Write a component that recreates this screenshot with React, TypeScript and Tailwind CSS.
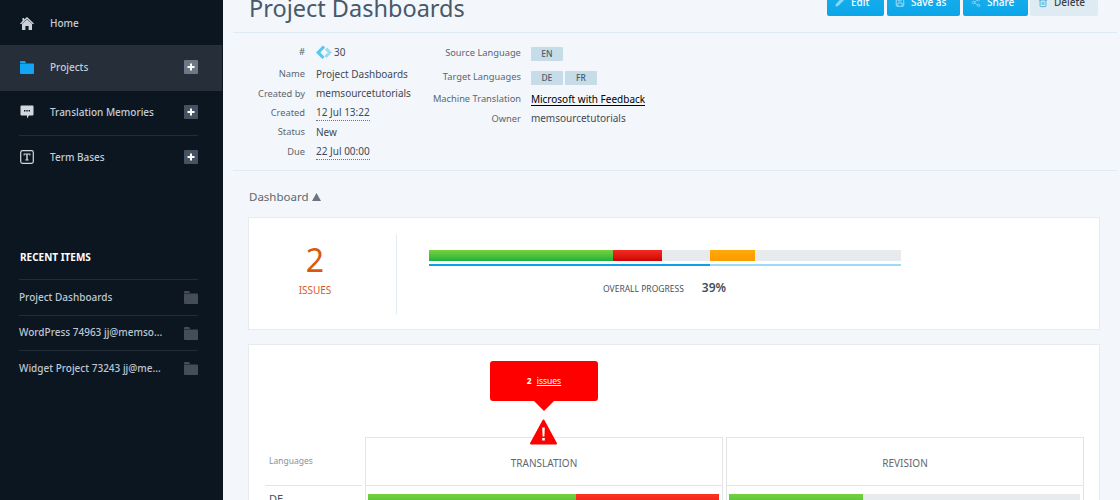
import { Pencil, Save, Share2, Trash2 } from "lucide-react";

const font = { fontFamily: '"Noto Sans", sans-serif' };

function Plus({ active }: { active?: boolean }) {
  return (
    <span className={`flex h-[14px] w-[14px] items-center justify-center rounded-[1px] text-white ${active ? "bg-[#6c7885]" : "bg-[#445261]"}`}>
      <svg width="8" height="8" viewBox="0 0 8 8"><path d="M3 0.5h2v2.5h2.5v2H5v2.5H3V5H0.5V3H3z" fill="#fff" /></svg>
    </span>
  );
}

function FolderIcon({ color, w = 14, h = 14 }: { color: string; w?: number; h?: number }) {
  return (
    <svg width={w} height={h} viewBox="0 0 14 14">
      <path d="M0 2a1 1 0 0 1 1-1h3.5a1 1 0 0 1 .9.6L6 3H1L0 3.6z" fill={color} />
      <path d="M0 4.5a1 1 0 0 1 1-1h12a1 1 0 0 1 1 1V13a1 1 0 0 1-1 1H1a1 1 0 0 1-1-1z" fill={color} />
    </svg>
  );
}

function NavRow({ icon, label, plus, active, h }: { icon: React.ReactNode; label: string; plus?: boolean; active?: boolean; h: string }) {
  return (
    <div className={`flex items-center pl-[20px] pr-[24px] ${h} ${active ? "bg-[#262e39]" : ""}`}>
      <span className="flex w-[30px] shrink-0 items-center">{icon}</span>
      <span className="flex-1 text-[10px] font-medium text-[#c3cdd9]">{label}</span>
      {plus && <Plus active={active} />}
    </div>
  );
}

function Recent({ label }: { label: string }) {
  return (
    <div className="flex h-[35.5px] items-center justify-between border-t border-[#222c37]">
      <span className="text-[10px] font-medium text-[#bcc7d3]">{label}</span>
      <FolderIcon color="#454d57" />
    </div>
  );
}

function Meta({ label, value, dotted, h }: { label: string; value: React.ReactNode; dotted?: boolean; h: string }) {
  return (
    <div className={`flex items-center ${h}`}>
      <span className="w-[72px] shrink-0 text-right text-[9.3px] text-[#5a6673]">{label}</span>
      <span className={`ml-[11px] whitespace-nowrap text-[10px] leading-[15px] text-[#3f4a56] ${dotted ? "border-b border-dotted border-[#6a7580]" : ""}`}>{value}</span>
    </div>
  );
}

function Meta2({ label, value, h }: { label: string; value: React.ReactNode; h: string }) {
  return (
    <div className={`flex items-center ${h}`}>
      <span className="w-[88px] shrink-0 whitespace-nowrap text-right text-[9.3px] text-[#5a6673]">{label}</span>
      <span className="ml-[10px] flex gap-[2px] whitespace-nowrap text-[10px] text-[#3f4a56]">{value}</span>
    </div>
  );
}

function Tag({ t }: { t: string }) {
  return <span className="mt-[2px] flex h-[14px] w-[32px] items-center justify-center rounded-[1px] bg-[#c6dde9] text-[8.5px] font-medium text-[#4d5b68]">{t}</span>;
}

function Btn({ icon, label, w, light }: { icon: React.ReactNode; label: string; w: string; light?: boolean }) {
  return (
    <div className={`flex h-[28px] items-end justify-start gap-[6px] rounded-[2px] pb-[8px] pl-[8px] text-[10px] font-medium leading-[12px] ${w} ${light ? "bg-[#deebf2] text-[#3a3f49]" : "bg-gradient-to-b from-[#1bb1ee] to-[#0aa5e8] text-white"}`}>
      <span className="flex h-[12px] w-[10px] items-center">{icon}</span>
      <span>{label}</span>
    </div>
  );
}

export default function App() {
  return (
    <div className="flex h-[500px] w-[1120px] overflow-hidden bg-[#f3f6fa]" style={font}>
      <aside className="flex w-[223px] shrink-0 flex-col bg-[#0c1621] pr-[1px]">
        <NavRow h="h-[45px] pt-[1px]" label="Home" icon={
          <svg width="14" height="13" viewBox="0 0 14 13"><path d="M7 0L14 6.4 12.9 7.2 7 2 1.1 7.2 0 6.4 2.5 4.1V1h1.6v1.6z" fill="#cdd2d8" /><path d="M2 6.8L7 2.6l5 4.2V13H8.6V9H5.4v4H2z" fill="#cdd2d8" /></svg>
        } />
        <NavRow h="h-[46px] pb-[2px]" active plus label="Projects" icon={<FolderIcon color="#12a5f4" />} />
        <NavRow h="h-[44px] pb-[2px]" plus label="Translation Memories" icon={
          <svg width="14" height="14" viewBox="0 0 14 14"><path d="M1.5 0.5h11a1 1 0 0 1 1 1v8a1 1 0 0 1-1 1H9L7 13.5v-3H1.5a1 1 0 0 1-1-1v-8a1 1 0 0 1 1-1z" fill="#d3d8de" /><path d="M4 5h1.4v1.4H4zM6.3 5h1.4v1.4H6.3zM8.6 5H10v1.4H8.6z" fill="#0c1621" /></svg>
        } />
        <div className="ml-[19px] mr-[24px] h-px bg-[#222c37]" />
        <NavRow h="h-[42px]" plus label="Term Bases" icon={
          <svg width="14" height="14" viewBox="0 0 14 14"><rect x="0.7" y="0.7" width="12.6" height="12.6" rx="1.8" fill="none" stroke="#d3d8de" strokeWidth="1.2" /><path d="M3.6 3.6h6.8v2H9.4v-1H7.7v5h1v1H5.3v-1h1v-5H4.6v1h-1z" fill="#d3d8de" /></svg>
        } />
        <div className="mt-[72px] pb-[14px] pl-[20px] text-[10px] font-bold text-white">RECENT ITEMS</div>
        <div className="ml-[19px] mr-[24px]">
          <Recent label="Project Dashboards" />
          <Recent label="WordPress 74963 jj@memso..." />
          <Recent label="Widget Project 73243 jj@me..." />
        </div>
      </aside>

      <main className="min-w-0 flex-1 pl-[10px]">
        <header className="mr-[3px] flex h-[33px] items-end justify-between border-b border-[#dfebf2] pl-[16px] pr-[19px]">
          <h1 className="mb-[7px] whitespace-nowrap text-[23.5px] leading-[34px] text-[#47596a]">Project Dashboards</h1>
          <div className="mb-[16px] flex">
            <Btn w="w-[57px] mr-[3px]" label="Edit" icon={<Pencil size={10} fill="#8fd9f8" stroke="#8fd9f8" />} />
            <Btn w="w-[73px] mr-[3px]" label="Save as" icon={<Save size={11} stroke="#b8e8fb" />} />
            <Btn w="w-[65px] mr-[2px]" label="Share" icon={<Share2 size={11} stroke="#8fd9f8" />} />
            <Btn w="w-[68px]" light label="Delete" icon={<Trash2 size={11} stroke="#2fa9d9" />} />
          </div>
        </header>

        <section className="mr-[3px] flex h-[138px] items-start border-b border-[#e1ecf2] pt-[9px]">
          <div className="flex flex-col">
            <Meta h="h-[20px]" label="#" value={
              <span className="flex items-center gap-[2px]">
                <svg width="16" height="15" viewBox="0 0 16 15"><path d="M8 1.5L2.2 7.5 7.5 13" fill="none" stroke="#5cc6f0" strokeWidth="3.2" /><path d="M10 3.5L13.8 7.5 9.5 12" fill="none" stroke="#9adcf5" strokeWidth="3" /></svg>
                <span>30</span>
              </span>
            } />
            <Meta h="h-[22px] mt-[1px]" label="Name" value="Project Dashboards" />
            <Meta h="h-[17px]" label="Created by" value="memsourcetutorials" />
            <Meta h="h-[21px]" dotted label="Created" value="12 Jul 13:22" />
            <Meta h="h-[18px]" label="Status" value="New" />
            <Meta h="h-[22px]" dotted label="Due" value="22 Jul 00:00" />
          </div>
          <div className="ml-[22px] mt-[1px] flex flex-col">
            <Meta2 h="h-[20px]" label="Source Language" value={<Tag t="EN" />} />
            <Meta2 h="h-[28px]" label="Target Languages" value={<><Tag t="DE" /><Tag t="FR" /></>} />
            <Meta2 h="h-[16px]" label="Machine Translation" value={<span className="border-b border-black leading-[12px] text-black">Microsoft with Feedback</span>} />
            <Meta2 h="h-[23px]" label="Owner" value="memsourcetutorials" />
          </div>
        </section>

        <div className="flex h-[46px] items-center gap-[3px] pl-[16px] pt-[6px] text-[11.5px] text-[#5d6670]">
          <span>Dashboard</span>
          <svg width="9" height="8" viewBox="0 0 9 8"><path d="M4.5 0L9 8H0z" fill="#6f757c" /></svg>
        </div>

        <div className="ml-[15px] mr-[20px] flex h-[113px] items-center border border-[#e8eaee] bg-white">
          <div className="flex h-[80px] w-[148px] flex-col items-center border-r border-[#e1ecf2] pr-[15px]">
            <span className="mt-[7px] text-[32px] leading-[38px] text-[#d9580d]">2</span>
            <span className="mt-[4px] text-[10px] leading-[14px] text-[#d9582b]">ISSUES</span>
          </div>
          <div className="ml-[32px] flex h-[80px] w-[472px] flex-col pt-[16px]">
            <div className="flex h-[11px] w-full bg-[#e8ebee]">
              <div className="h-full w-[184px] bg-gradient-to-b from-[#76d03e] to-[#10b23c]" />
              <div className="h-full w-[49px] bg-gradient-to-b from-[#f62a20] to-[#cc0202]" />
              <div className="w-[48px]" />
              <div className="h-full w-[45px] bg-gradient-to-b from-[#ffa908] to-[#fd9a00]" />
            </div>
            <div className="mt-[3px] flex h-[2px] w-full bg-[#9cdcfb]">
              <div className="h-full w-[281px] bg-[#0ba0e8]" />
            </div>
            <div className="mt-[16px] flex items-center pl-[174px]">
              <span className="whitespace-nowrap text-[8.5px] leading-[12px] text-[#47515c]">OVERALL PROGRESS</span>
              <span className="mb-[3px] ml-[18px] text-[12px] font-semibold leading-[12px] text-[#454f5b]">39%</span>
            </div>
          </div>
        </div>

        <div className="relative ml-[15px] mr-[20px] mt-[14px] h-[170px] border border-[#e8eaee] bg-white pl-[16px] pt-[92px]">
          <div className="absolute left-[241px] top-[16px] flex h-[40px] w-[108px] items-center justify-center gap-[5px] rounded-[3px] bg-[#ff0000] text-[8.5px] text-white">
            <b>2</b>
            <span className="underline">issues</span>
            <span className="absolute bottom-[-10px] left-[44px] h-0 w-0 border-x-[10px] border-t-[10px] border-x-transparent border-t-[#ff0000]" />
          </div>
          <svg className="absolute left-[281px] top-[74px]" width="27" height="26" viewBox="0 0 27 26">
            <path d="M13.5 1.5L26 24.5H1z" fill="#ff0000" stroke="#ff0000" strokeWidth="2" strokeLinejoin="round" />
            <path d="M12.2 8.5h2.6l-.4 9h-1.8zM12.2 19h2.6v2.6h-2.6z" fill="#fff" />
          </svg>
          <div className="grid grid-cols-[97px_358px_358px] gap-x-[3px]">
            <div className="flex h-[49px] items-center border-b border-[#e2e4e6] pl-[4px] pt-[1px] text-[8.5px] text-[#8a9098]">Languages</div>
            <div className="flex h-[49px] items-center justify-center border border-[#e2e4e6] pt-[3px] text-[10px] text-[#5f6770]">TRANSLATION</div>
            <div className="flex h-[49px] items-center justify-center border border-[#e2e4e6] pt-[3px] text-[10px] text-[#5f6770]">REVISION</div>
            <div className="pl-[4px] pt-[5px] text-[11px] text-[#47515c]">DE</div>
            <div className="border-x border-[#e2e4e6] px-[2px] pt-[8px]">
              <div className="flex h-[12px] w-[351px]">
                <div className="h-full w-[208px] bg-gradient-to-b from-[#76d03e] to-[#3fc23a]" />
                <div className="h-full flex-1 bg-gradient-to-b from-[#ff3322] to-[#e81a12]" />
              </div>
            </div>
            <div className="border-x border-[#e2e4e6] px-[2px] pt-[8px]">
              <div className="flex h-[12px] w-[351px] bg-[#e8ebee]">
                <div className="h-full w-[134px] bg-gradient-to-b from-[#76d03e] to-[#3fc23a]" />
              </div>
            </div>
          </div>
        </div>
      </main>
    </div>
  );
}
